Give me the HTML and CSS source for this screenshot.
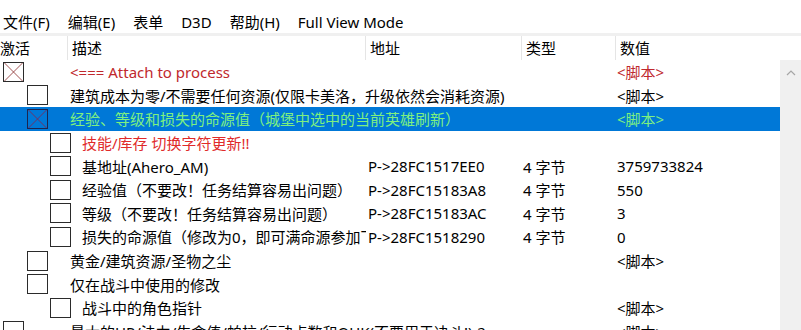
FILE: index.html
```html
<!DOCTYPE html>
<html lang="zh-CN">
<head>
    <meta charset="UTF-8">
    <title>Cheat Table</title>
    <link rel="stylesheet" href="styles.css">
</head>
<body>
    <div class="titleStrip"></div>
    <div class="menuBar">
        <span>文件(F)</span>
        <span>编辑(E)</span>
        <span>表单</span>
        <span>D3D</span>
        <span>帮助(H)</span>
        <span>Full View Mode</span>
    </div>
    <div class="menuSep"></div>
    <div class="headRow">
        <div class="hc hActive">激活</div>
        <div class="hc hDesc">描述</div>
        <div class="hc hAddr">地址</div>
        <div class="hc hType">类型</div>
        <div class="hc hVal">数值</div>
    </div>
    <div class="listArea">
        <div class="rows">
            <div class="row lv0">
                <div class="tree"><span class="box"><svg viewBox="0 0 20 20"><path d="M0 0L20 20M20 0L0 20" stroke="#8a2a2a" stroke-width="0.9"/></svg></span></div>
                <div class="desc red">&lt;=== Attach to process</div>
                <div class="addr"></div>
                <div class="type"></div>
                <div class="val red">&lt;脚本&gt;</div>
            </div>
            <div class="row lv1">
                <div class="tree"><span class="box"></span></div>
                <div class="desc">建筑成本为零/不需要任何资源(仅限卡美洛，升级依然会消耗资源)</div>
                <div class="addr"></div>
                <div class="type"></div>
                <div class="val">&lt;脚本&gt;</div>
            </div>
            <div class="row lv1 selected">
                <div class="tree"><span class="box"><svg viewBox="0 0 20 20"><path d="M0 0L20 20M20 0L0 20" stroke="#7a2a5a" stroke-width="1"/></svg></span></div>
                <div class="desc">经验、等级和损失的命源值（城堡中选中的当前英雄刷新）</div>
                <div class="addr"></div>
                <div class="type"></div>
                <div class="val">&lt;脚本&gt;</div>
            </div>
            <div class="row lv2">
                <div class="tree"><span class="box"></span></div>
                <div class="desc red2">技能/库存 切换字符更新!!</div>
                <div class="addr"></div>
                <div class="type"></div>
                <div class="val"></div>
            </div>
            <div class="row lv2">
                <div class="tree"><span class="box"></span></div>
                <div class="desc">基地址(Ahero_AM)</div>
                <div class="addr">P-&gt;28FC1517EE0</div>
                <div class="type">4 字节</div>
                <div class="val">3759733824</div>
            </div>
            <div class="row lv2">
                <div class="tree"><span class="box"></span></div>
                <div class="desc">经验值（不要改！任务结算容易出问题）</div>
                <div class="addr">P-&gt;28FC15183A8</div>
                <div class="type">4 字节</div>
                <div class="val">550</div>
            </div>
            <div class="row lv2">
                <div class="tree"><span class="box"></span></div>
                <div class="desc">等级（不要改！任务结算容易出问题）</div>
                <div class="addr">P-&gt;28FC15183AC</div>
                <div class="type">4 字节</div>
                <div class="val">3</div>
            </div>
            <div class="row lv2">
                <div class="tree"><span class="box"></span></div>
                <div class="desc clip">损失的命源值（修改为0，即可满命源参加下一场战斗）</div>
                <div class="addr">P-&gt;28FC1518290</div>
                <div class="type">4 字节</div>
                <div class="val">0</div>
            </div>
            <div class="row lv1">
                <div class="tree"><span class="box"></span></div>
                <div class="desc">黄金/建筑资源/圣物之尘</div>
                <div class="addr"></div>
                <div class="type"></div>
                <div class="val">&lt;脚本&gt;</div>
            </div>
            <div class="row lv1">
                <div class="tree"><span class="box"></span></div>
                <div class="desc">仅在战斗中使用的修改</div>
                <div class="addr"></div>
                <div class="type"></div>
                <div class="val"></div>
            </div>
            <div class="row lv2">
                <div class="tree"><span class="box"></span></div>
                <div class="desc">战斗中的角色指针</div>
                <div class="addr"></div>
                <div class="type"></div>
                <div class="val">&lt;脚本&gt;</div>
            </div>
            <div class="row lv0">
                <div class="tree"><span class="box"></span></div>
                <div class="desc">最大的HP/法力/生命值/帕拉/行动点数和QUK(不要用于决斗!)-2</div>
                <div class="addr"></div>
                <div class="type"></div>
                <div class="val">&lt;脚本&gt;</div>
            </div>
        </div>
        <div class="scrollBar">
            <svg class="upArrow" viewBox="0 0 10 6"><path d="M1 5L5 1L9 5" fill="none" stroke="#a6a6a6" stroke-width="1.2"/></svg>
        </div>
    </div>
</body>
</html>
```
FILE: styles.css
```css
html,body {
    margin: 0;
    height: 100%;
    overflow: hidden;
}
body {
    background: #fff;
    color: #000;
    font-family: "Noto Sans", "Noto Sans CJK SC", sans-serif;
    font-size: 15px;
}
.titleStrip {
    height: 11px;
}
.menuBar {
    display: flex;
    gap: 18px;
    padding-left: 3px;
    height: 22px;
    line-height: 22px;
    white-space: nowrap;
}
.menuSep {
    height: 3px;
    background: #f0f0f0;
}
.headRow {
    display: flex;
    height: 24px;
    line-height: 24px;
}
.hc {
    box-sizing: border-box;
    padding-left: 4px;
    border-right: 1px solid #e5e5e5;
    white-space: nowrap;
}
.hActive {
    width: 68px;
    padding-left: 0;
}
.hDesc {
    width: 298px;
}
.hAddr {
    width: 156px;
}
.hType {
    width: 94px;
}
.hVal {
    flex: 1;
    border-right: none;
}
.listArea {
    display: flex;
    height: 270px;
}
.rows {
    flex: 1;
    overflow: hidden;
}
.scrollBar {
    width: 21px;
    background: #f0f0f0;
    display: flex;
    justify-content: center;
}
.upArrow {
    width: 10px;
    height: 6px;
    margin-top: 10px;
}
.row {
    display: flex;
    align-items: center;
    height: 23.6px;
    white-space: nowrap;
}
.tree {
    width: 68px;
    flex: none;
    display: flex;
    align-items: center;
}
.box {
    flex: none;
    width: 21px;
    height: 20px;
    box-sizing: border-box;
    border: 1px solid #2b2b2b;
    display: block;
}
.box svg {
    display: block;
    width: 100%;
    height: 100%;
}
.lv0 .box {
    margin-left: 3px;
}
.lv1 .box {
    margin-left: 27px;
}
.lv2 .box {
    margin-left: 50px;
}
.desc {
    width: 298px;
    flex: none;
    box-sizing: border-box;
    padding-left: 2px;
}
.desc.clip {
    overflow: hidden;
}
.lv2 .desc {
    padding-left: 14px;
}
.addr {
    width: 156px;
    flex: none;
    box-sizing: border-box;
    padding-left: 2px;
}
.type {
    width: 94px;
    flex: none;
    box-sizing: border-box;
    padding-left: 1px;
}
.val {
    flex: 1;
    padding-left: 1px;
}
.red {
    color: #c0282d;
}
.red2 {
    color: #e02a2a;
}
.selected {
    background: #0078d7;
    color: #7ff07f;
}
.selected .box {
    border-color: #1c2550;
}
```
